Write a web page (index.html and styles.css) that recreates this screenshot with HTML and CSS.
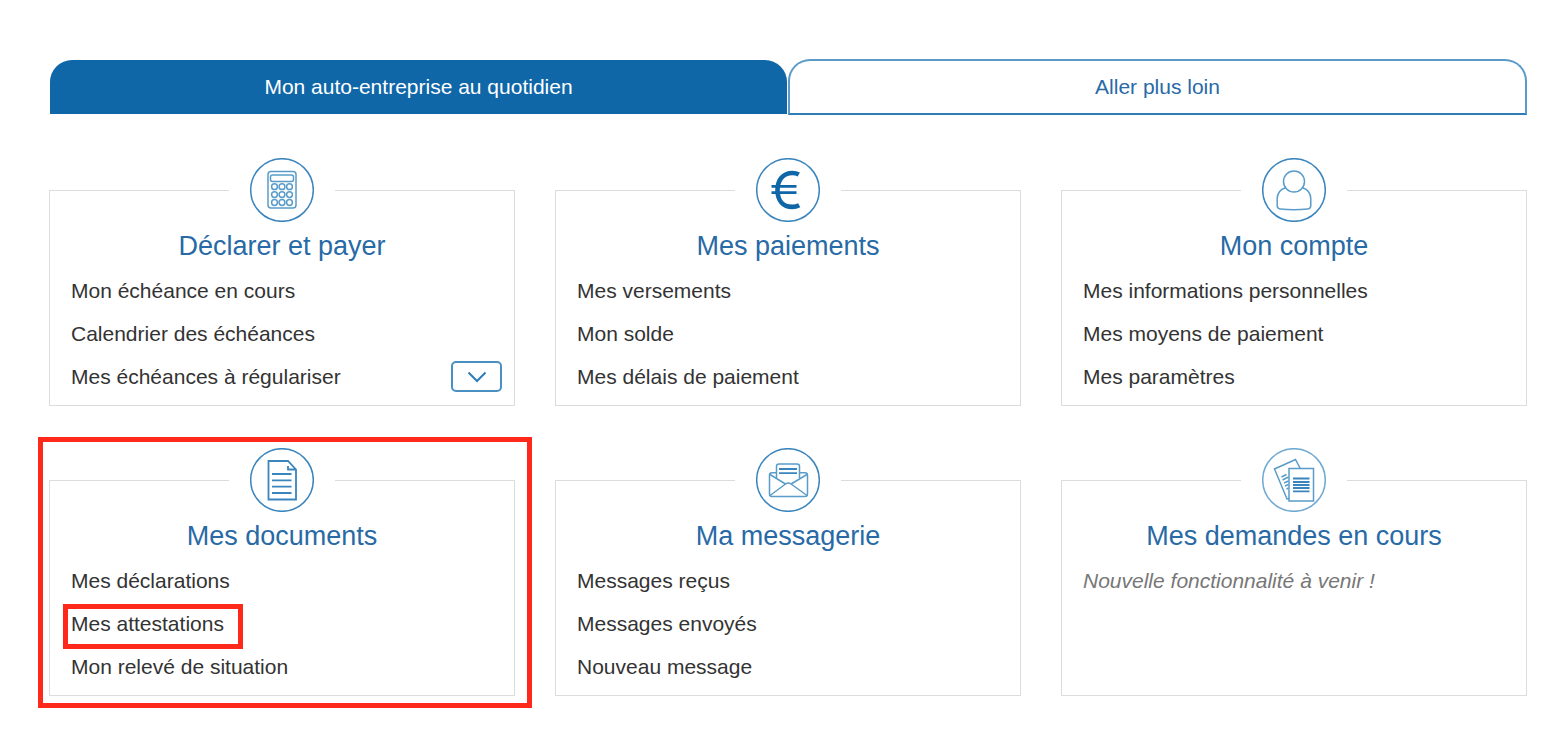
FILE: index.html
```
<!DOCTYPE html>
<html lang="fr">
<head>
    <meta charset="UTF-8">
    <meta name="viewport" content="width=device-width, initial-scale=1.0">
    <title>Mon auto-entreprise</title>
    <link rel="stylesheet" href="styles.css">
</head>
<body>
<nav class="tabs">
    <button type="button" class="tab active">Mon auto-entreprise au quotidien</button>
    <button type="button" class="tab">Aller plus loin</button>
</nav>

<main class="cards">
    <section class="card">
        <div class="card-icon">
            <svg viewBox="0 0 64 64">
                <circle class="ring" cx="32" cy="32" r="31.3"/>
                <rect x="18" y="13.500" width="28" height="36.500" rx="3"/>
                <rect x="20.500" y="17" width="23" height="6.500" rx="2"/>
                <circle cx="24.500" cy="28.700" r="2.900"/>
                <circle cx="32" cy="28.700" r="2.900"/>
                <circle cx="39.500" cy="28.700" r="2.900"/>
                <circle cx="24.500" cy="36.600" r="2.900"/>
                <circle cx="32" cy="36.600" r="2.900"/>
                <circle cx="39.500" cy="36.600" r="2.900"/>
                <circle cx="24.500" cy="44.500" r="2.900"/>
                <circle cx="32" cy="44.500" r="2.900"/>
                <circle cx="39.500" cy="44.500" r="2.900"/>
            </svg>
        </div>
        <h2>Déclarer et payer</h2>
        <ul>
            <li><a href="#">Mon échéance en cours</a></li>
            <li><a href="#">Calendrier des échéances</a></li>
            <li>
                <a href="#">Mes échéances à régulariser</a>
                <button type="button" class="more" aria-label="Afficher plus">
                    <svg viewBox="0 0 20 12"><path d="M1.500 1.500L10 10l8.500-8.500"/></svg>
                </button>
            </li>
        </ul>
    </section>

    <section class="card">
        <div class="card-icon">
            <svg viewBox="0 0 64 64">
                <circle class="ring" cx="32" cy="32" r="31.3"/>
                <path class="euro" d="M42.800 16.500C40.800 15.400 38.500 15 36.300 15C27 15 21.500 22 21.500 32C21.500 42.500 27 48.900 36.300 48.900C38.800 48.900 41.200 48.300 43.200 47.200"/>
                <path class="euro-bar" d="M15.500 28.300h25M15.500 34.700h25"/>
            </svg>
        </div>
        <h2>Mes paiements</h2>
        <ul>
            <li><a href="#">Mes versements</a></li>
            <li><a href="#">Mon solde</a></li>
            <li><a href="#">Mes délais de paiement</a></li>
        </ul>
    </section>

    <section class="card">
        <div class="card-icon">
            <svg viewBox="0 0 64 64">
                <circle class="ring" cx="32" cy="32" r="31.3"/>
                <circle cx="32" cy="23.500" r="10.500"/>
                <path d="M23.500 29.800C18 31.500 15.200 35.500 15.200 41v6.500c0 2 1 3.300 3 3.500c9 1 18.500 1 27.500 0c2-.2 3.100-1.500 3.100-3.500V41c0-5.500-3-9.500-8.300-11.200"/>
            </svg>
        </div>
        <h2>Mon compte</h2>
        <ul>
            <li><a href="#">Mes informations personnelles</a></li>
            <li><a href="#">Mes moyens de paiement</a></li>
            <li><a href="#">Mes paramètres</a></li>
        </ul>
    </section>

    <section class="card highlight">
        <div class="card-icon">
            <svg viewBox="0 0 64 64">
                <circle class="ring" cx="32" cy="32" r="31.3"/>
                <path class="strong" d="M18.500 13H38l8 8.500V51.500H18.500zM38 18v3.500h8"/>
                <path class="strong" d="M22 26h19.500M22 32.300h19.500M22 38.600h19.500M22 45h19.500"/>
            </svg>
        </div>
        <h2>Mes documents</h2>
        <ul>
            <li><a href="#">Mes déclarations</a></li>
            <li><a href="#" class="marked">Mes attestations</a></li>
            <li><a href="#">Mon relevé de situation</a></li>
        </ul>
    </section>

    <section class="card">
        <div class="card-icon">
            <svg viewBox="0 0 64 64">
                <circle class="ring" cx="32" cy="32" r="31.3"/>
                <path d="M20.500 30V18.500q0-2.500 2.500-2.500H41q2.500 0 2.500 2.500V30"/>
                <path class="strong" d="M23 21h18M23 25.200h18"/>
                <path d="M20.500 24.700H16q-2.500 0-2.500 2.500V46q0 2.500 2.500 2.500H49q2.500 0 2.500-2.500V27.200q0-2.500-2.500-2.500H43.500"/>
                <path d="M14 26.500L29.500 36q2.800-2 5.600 0L51 26.500M14 47.500L29.500 36M51 47.500L35.100 36"/>
            </svg>
        </div>
        <h2>Ma messagerie</h2>
        <ul>
            <li><a href="#">Messages reçus</a></li>
            <li><a href="#">Messages envoyés</a></li>
            <li><a href="#">Nouveau message</a></li>
        </ul>
    </section>

    <section class="card">
        <div class="card-icon soft">
            <svg viewBox="0 0 64 64">
                <circle class="ring" cx="32" cy="32" r="31.3"/>
                <path d="M27.500 50.500L25 51L12.500 21L33.500 11.500L38.500 21"/>
                <path d="M19.500 29l5-2.500M20.500 32l6-3M22 35l4.500-2M23 38l3.500-1.500M24.500 41l2-1"/>
                <rect x="27" y="20.500" width="24.500" height="32.500"/>
                <path class="strong" d="M31 30.500h16.500M31 34h16.500M31 37h16.500M31 40h16.500M31 43.300h16.500"/>
            </svg>
        </div>
        <h2>Mes demandes en cours</h2>
        <p>Nouvelle fonctionnalité à venir !</p>
    </section>
</main>
</body>
</html>
```
FILE: styles.css
```
* {
    box-sizing: border-box;
}

body {
    margin: 0;
    padding: 59px 39px 40px 49px;
    font-family: "Liberation Sans", Arial, sans-serif;
    font-size: 21px;
    color: #333;
    background-color: #fff;
}

.tabs {
    display: grid;
    grid-template-columns: 1fr 1fr;
}

.tab {
    height: 56px;
    padding: 0;
    border: 2px solid #5b9bc9;
    border-bottom-color: #2f7db8;
    border-radius: 22px 22px 0 0;
    background-color: #fff;
    font: inherit;
    color: #286aa6;
    cursor: pointer;
}

.tab.active {
    height: 54px;
    margin: 1px;
    border: none;
    background-color: #0f67a8;
    color: #fff;
}

.cards {
    display: grid;
    grid-template-columns: repeat(3, 1fr);
    gap: 74px 40px;
    margin-top: 75px;
}

.card {
    position: relative;
    min-height: 216px;
    padding: 0 12px 7px;
    border: 1px solid #dcdcdc;
}

.card-icon {
    width: 106px;
    height: 64px;
    margin: -33px auto 0;
    padding: 0 21px;
    background-color: #fff;
}

.card-icon svg {
    display: block;
    width: 64px;
    height: 64px;
    fill: none;
    stroke: #5a9cc9;
    stroke-width: 1.5;
}

.card-icon .ring {
    stroke: #3a85bd;
}

.card-icon .strong {
    stroke: #3a85bd;
    stroke-width: 1.8;
}

.card-icon.soft .ring {
    stroke: #6fa9d1;
}

.card-icon .euro {
    stroke: #0f67a8;
    stroke-width: 4.6;
}

.card-icon .euro-bar {
    stroke: #0f67a8;
    stroke-width: 2.8;
}

h2 {
    margin: 0;
    padding-top: 2px;
    font-size: 27px;
    font-weight: normal;
    line-height: 45px;
    text-align: center;
    color: #286aa6;
}

ul {
    margin: 0;
    padding: 0 0 0 9px;
    list-style: none;
}

li {
    display: flex;
    align-items: center;
    justify-content: space-between;
    height: 43px;
}

a {
    position: relative;
    color: #333;
    text-decoration: none;
}

p {
    margin: 0;
    padding-left: 9px;
    line-height: 43px;
    font-style: italic;
    color: #777;
}

.more {
    display: flex;
    align-items: center;
    justify-content: center;
    width: 51px;
    height: 31px;
    padding: 0;
    border: 2px solid #4a90c2;
    border-radius: 5px;
    background-color: #fff;
    cursor: pointer;
}

.more svg {
    width: 20px;
    height: 12px;
    fill: none;
    stroke: #2f7db8;
    stroke-width: 2;
}

/* cadres rouges */
.highlight::after {
    content: "";
    position: absolute;
    inset: -44px -18px -13px -12px;
    border: 5px solid #ff291b;
    pointer-events: none;
}

.marked::after {
    content: "";
    position: absolute;
    inset: -8px -19px -13px -8px;
    border: 5px solid #ff291b;
}
```
